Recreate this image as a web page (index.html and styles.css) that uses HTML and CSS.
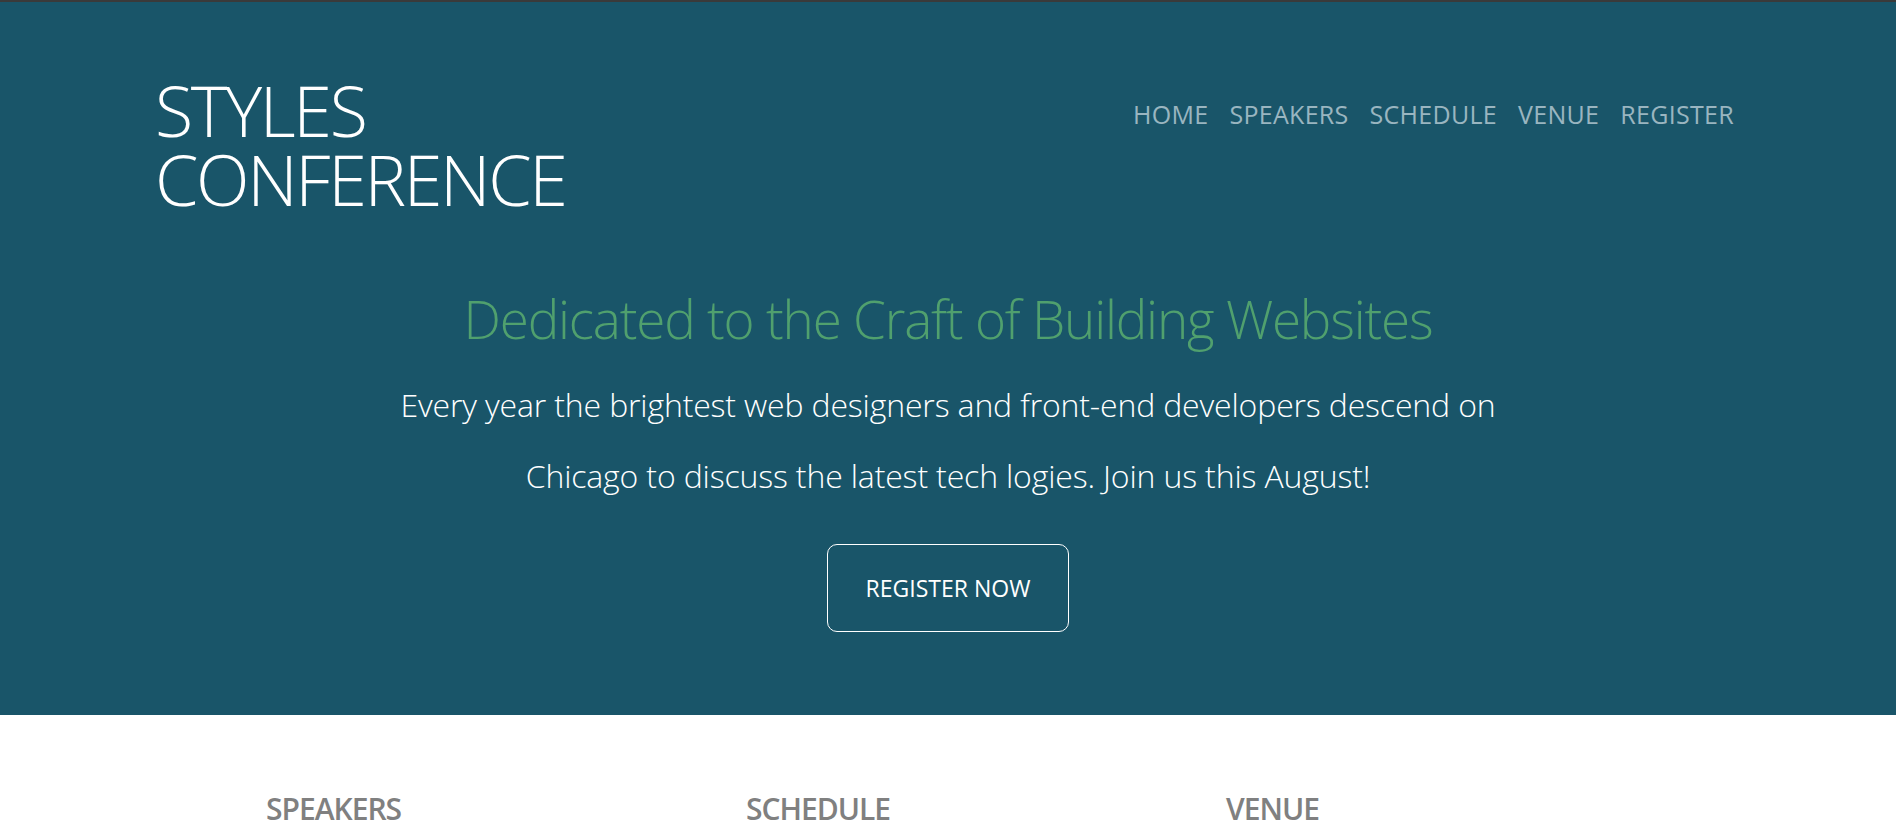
FILE: index.html
```html
<!DOCTYPE html>
<html lang="en">
<head>
<meta charset="utf-8">
<title>Styles Conference</title>
<link rel="stylesheet" href="styles.css">
</head>
<body>
<header class="hero">
  <div class="topbar">
    <h1 class="logo"><span class="logo-line">STYLES</span><span class="logo-line">CONFERENCE</span></h1>
    <nav class="nav">
      <a href="#">HOME</a>
      <a href="#">SPEAKERS</a>
      <a href="#">SCHEDULE</a>
      <a href="#">VENUE</a>
      <a href="#">REGISTER</a>
    </nav>
  </div>
  <div class="intro">
    <h2 class="tagline">Dedicated to the Craft of Building Websites</h2>
    <p class="lead">Every year the brightest web designers and front-end developers descend on Chicago to discuss the latest tech logies. Join us this August!</p>
    <a class="btn" href="#">REGISTER NOW</a>
  </div>
</header>
<section class="features">
  <div class="feature"><h3>SPEAKERS</h3></div>
  <div class="feature"><h3>SCHEDULE</h3></div>
  <div class="feature"><h3>VENUE</h3></div>
</section>
</body>
</html>
```

FILE: styles.css
```css
* { box-sizing: border-box; }
html, body { margin: 0; padding: 0; }
body {
  font-family: "Open Sans", "Liberation Sans", sans-serif;
  background: #ffffff;
  overflow: hidden;
}
.hero {
  background: #195569;
  border-top: 2px solid #3a3a3a;
  padding-bottom: 83px;
}
.topbar {
  display: flex;
  justify-content: space-between;
  align-items: flex-start;
  padding: 74px 162px 0 155px;
}
.logo {
  margin: 0;
  font-weight: 300;
  font-size: 70px;
  line-height: 69px;
  color: #ffffff;
  letter-spacing: -2.35px;
}
.logo-line {
  display: block;
}
.nav {
  display: flex;
  gap: 21px;
  margin-top: 21px;
}
.nav a {
  color: #9ab5c0;
  text-decoration: none;
  font-size: 25px;
  font-weight: 400;
  letter-spacing: 0.3px;
}
.intro {
  display: flex;
  flex-direction: column;
  align-items: center;
  text-align: center;
}
.tagline {
  margin: 68px 0 0;
  font-size: 53px;
  font-weight: 300;
  color: #50a06e;
  letter-spacing: -1.2px;
}
.lead {
  margin: 14px 0 0;
  max-width: 1140px;
  font-size: 32px;
  line-height: 71px;
  font-weight: 300;
  color: #ffffff;
  letter-spacing: -0.15px;
}
.btn {
  margin-top: 33px;
  display: inline-block;
  border: 1px solid #ffffff;
  border-radius: 10px;
  padding: 27px 0 27px;
  width: 242px;
  text-align: center;
  color: #ffffff;
  text-decoration: none;
  font-size: 23px;
}
.features {
  display: grid;
  grid-template-columns: repeat(3, 480px);
  padding: 73px 0 0 266px;
}
.feature h3 {
  margin: 0;
  font-size: 30px;
  font-weight: 600;
  color: #808080;
  letter-spacing: -1px;
}
```
